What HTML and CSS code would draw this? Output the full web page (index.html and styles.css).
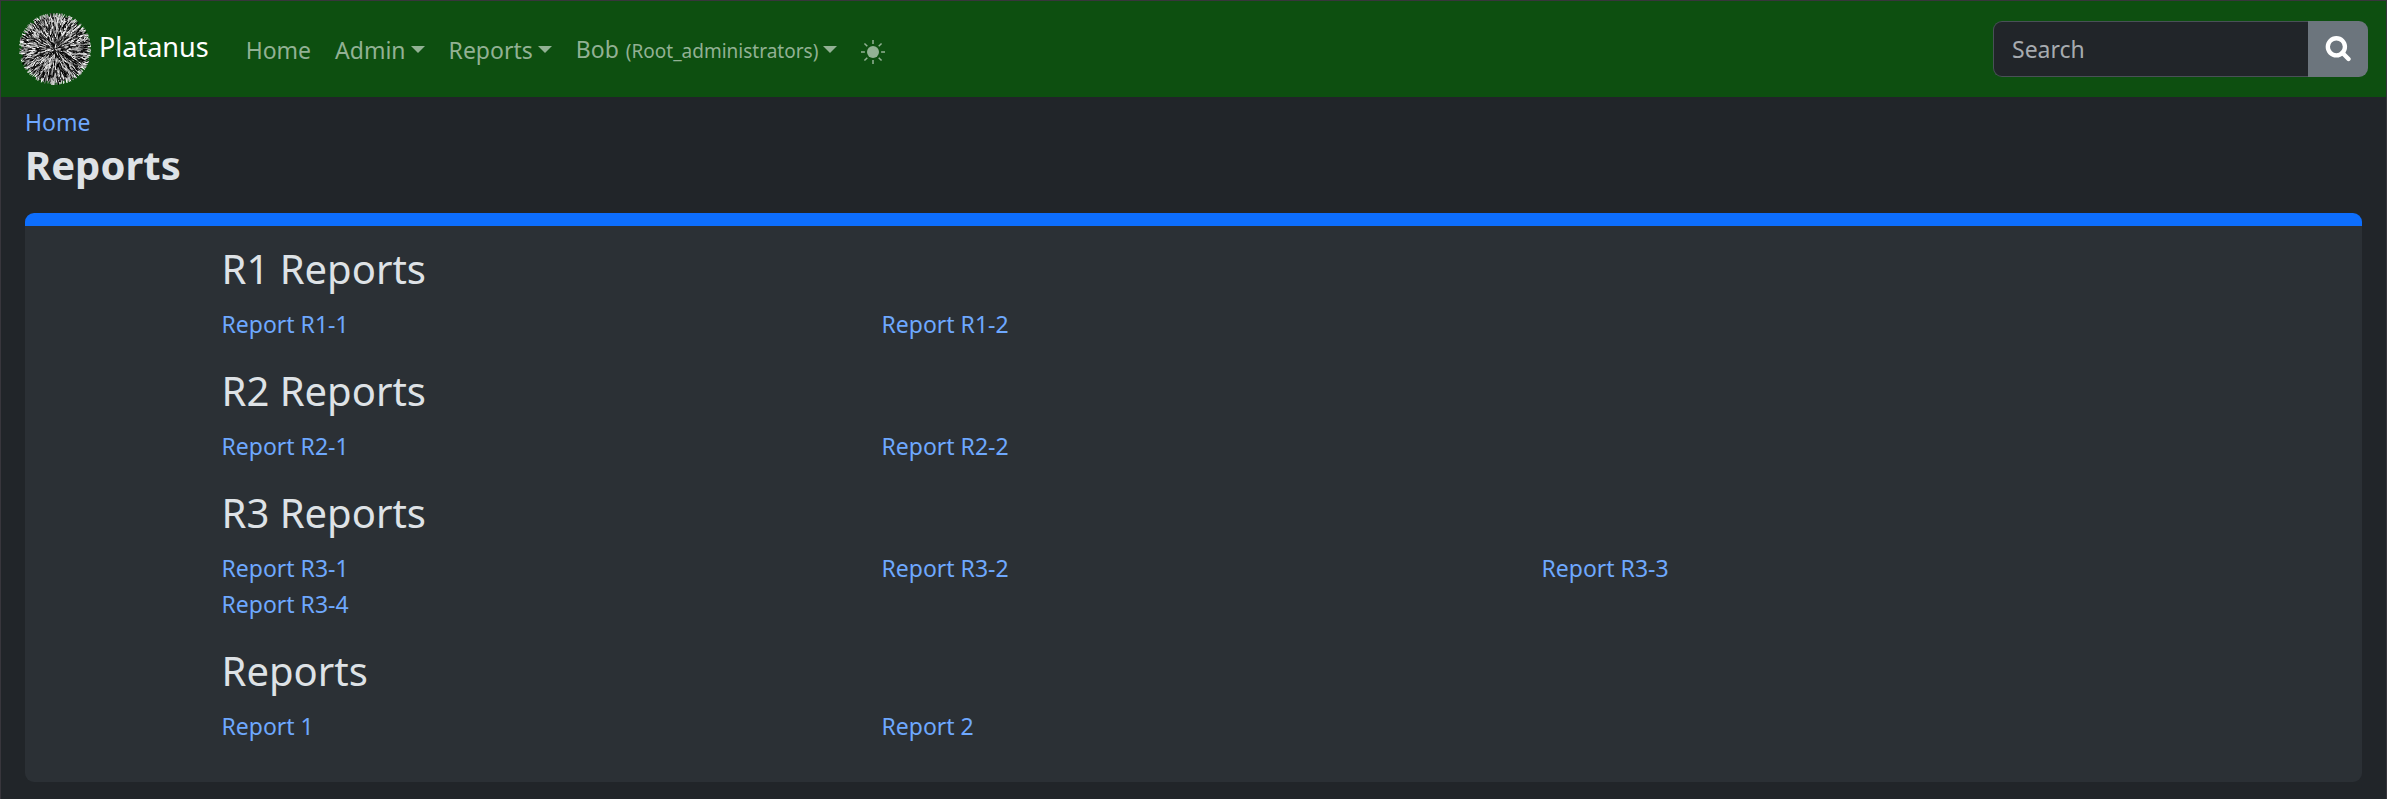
FILE: index.html
```html
<!DOCTYPE html>
<html lang="en">
<head>
<meta charset="utf-8">
<meta name="viewport" content="width=device-width, initial-scale=1">
<title>Reports - Platanus</title>
<link rel="stylesheet" href="styles.css">
</head>
<body>
<header class="navbar">
  <a class="brand" href="#">
    <svg class="brand-logo" viewBox="-37 -37 74 74" aria-hidden="true"><circle class="logo-base" r="33"/><g id="logo-spikes"></g></svg>
    <span>Platanus</span>
  </a>
  <nav class="nav" aria-label="Main">
    <a class="nav-link" href="#">Home</a>
    <button class="nav-link caret" type="button">Admin</button>
    <button class="nav-link caret" type="button">Reports</button>
    <button class="nav-link caret" type="button">Bob <small class="role">(Root_administrators)</small></button>
    <button class="nav-link" type="button" aria-label="Light theme">
      <svg class="sun" viewBox="0 0 16 16" aria-hidden="true"><circle cx="8" cy="8" r="4"/><path d="M8 0v2.600M8 13.400v2.600M0 8h2.600M13.400 8h2.600M2.300 2.300l1.900 1.900M11.800 11.800l1.900 1.900M2.300 13.700l1.900-1.900M11.800 4.200l1.900-1.900"/></svg>
    </button>
  </nav>
  <form class="search" role="search">
    <input class="search-input" type="search" placeholder="Search" aria-label="Search">
    <button class="search-button" type="submit" aria-label="Submit search">
      <svg class="search-icon" viewBox="0 0 24 24" aria-hidden="true"><circle cx="10.500" cy="10" r="7.900"/><path d="M16 15.500l5.700 5.700"/></svg>
    </button>
  </form>
</header>
<main class="page">
  <a class="link" href="#">Home</a>
  <h1 class="title">Reports</h1>
  <div class="card">
    <div class="container">
      <section class="group">
        <h2 class="heading">R1 Reports</h2>
        <div class="links"><a class="link" href="#">Report R1-1</a><a class="link" href="#">Report R1-2</a></div>
      </section>
      <section class="group">
        <h2 class="heading">R2 Reports</h2>
        <div class="links"><a class="link" href="#">Report R2-1</a><a class="link" href="#">Report R2-2</a></div>
      </section>
      <section class="group">
        <h2 class="heading">R3 Reports</h2>
        <div class="links"><a class="link" href="#">Report R3-1</a><a class="link" href="#">Report R3-2</a><a class="link" href="#">Report R3-3</a><a class="link" href="#">Report R3-4</a></div>
      </section>
      <section class="group">
        <h2 class="heading">Reports</h2>
        <div class="links"><a class="link" href="#">Report 1</a><a class="link" href="#">Report 2</a></div>
      </section>
    </div>
  </div>
</main>
<script src="logo.js"></script>
</body>
</html>
```
FILE: styles.css
```css
* { box-sizing: border-box; }
body {
  margin: 0;
  min-height: 100vh;
  border: 1px solid #38363c;
  border-bottom: 0;
  background: #212529;
  color: #dee2e6;
  font: 23px/36px "Noto Sans", "Open Sans", sans-serif;
}
a { text-decoration: none; }
button, input { font: inherit; }
.navbar {
  display: flex;
  align-items: center;
  padding: 8px 18px 8px 17px;
  min-height: 96px;
  background: #0d4f10;
}
.brand {
  display: flex;
  align-items: center;
  gap: 7px;
  margin-right: 25px;
  color: #fff;
  font-size: 27px;
}
.brand span { padding-bottom: 4px; }
.brand-logo { width: 74px; height: 74px; }
.logo-base { fill: #222; }
.nav { display: flex; align-items: center; padding-top: 2px; }
.nav-link {
  display: flex;
  align-items: baseline;
  padding: 12px;
  border: 0;
  background: none;
  color: #92b194;
}
.caret::after {
  content: "";
  align-self: center;
  margin-left: 5px;
  margin-bottom: 2px;
  border: 7px solid transparent;
  border-top-color: currentColor;
  border-bottom: 0;
}
.role { margin-left: 7px; font-size: 19px; }
.sun {
  width: 24px;
  height: 24px;
  align-self: center;
  margin-top: 4px;
  fill: currentColor;
  stroke: currentColor;
}
.sun circle { stroke: none; }
.search { display: flex; width: 375px; height: 56px; margin-left: auto; }
.search-input {
  flex: 1;
  min-width: 0;
  padding: 8px 18px;
  border: 1px solid #495057;
  border-right: 0;
  border-radius: 9px 0 0 9px;
  background: #212529;
  color: #dee2e6;
}
.search-input::placeholder { color: #a7abaf; opacity: 1; }
.search-button {
  display: flex;
  align-items: center;
  justify-content: center;
  width: 60px;
  padding: 0;
  border: 0;
  border-radius: 0 9px 9px 0;
  background: #6c757d;
  color: #fff;
}
.search-icon { width: 26px; height: 26px; fill: none; stroke: currentColor; stroke-width: 4; stroke-linecap: round; }
.page { padding: 7px 24px 16px; }
.page > .link { display: block; }
.link { color: #6ea8fe; }
.title { margin: 0 0 23px; font-size: 40px; line-height: 50px; font-weight: 700; }
.card {
  padding: 18px 16px 14px;
  border-top: 13px solid #0d6efd;
  border-radius: 9px;
  background: #2b3035;
}
.container { max-width: 1980px; margin: 0 auto; }
.group { margin-bottom: 24px; }
.heading { margin: 0 0 12px; padding-left: 18px; font-size: 40px; line-height: 50px; font-weight: 400; }
.links { display: grid; grid-template-columns: repeat(3, 1fr); }
.links .link { padding: 0 18px; }
```
FILE: logo.js
```js
// Draws the seed ball as short radial bristles in mixed greys.
const group = document.getElementById("logo-spikes");
let seed = 17;
function random() {
  seed = (seed * 16807) % 2147483647;
  return seed / 2147483647;
}
const shades = ["#fff", "#eee", "#ccc", "#aaa", "#777", "#111", "#000", "#000"];
for (let i = 0; i < 1900; i++) {
  const angle = random() * Math.PI * 2;
  const start = Math.sqrt(random()) * 33;
  const end = Math.min(36, start + 2 + random() * 4);
  const bend = angle + (random() - 0.5) * 0.1;
  const line = document.createElementNS("http://www.w3.org/2000/svg", "line");
  line.setAttribute("x1", Math.cos(angle) * start);
  line.setAttribute("y1", Math.sin(angle) * start);
  line.setAttribute("x2", Math.cos(bend) * end);
  line.setAttribute("y2", Math.sin(bend) * end);
  // The rim stays light so that the outline reads against the bar.
  const choices = start > 31 ? 5 : shades.length;
  line.setAttribute("stroke", shades[Math.floor(random() * choices)]);
  line.setAttribute("stroke-width", "1");
  group.appendChild(line);
}
```
